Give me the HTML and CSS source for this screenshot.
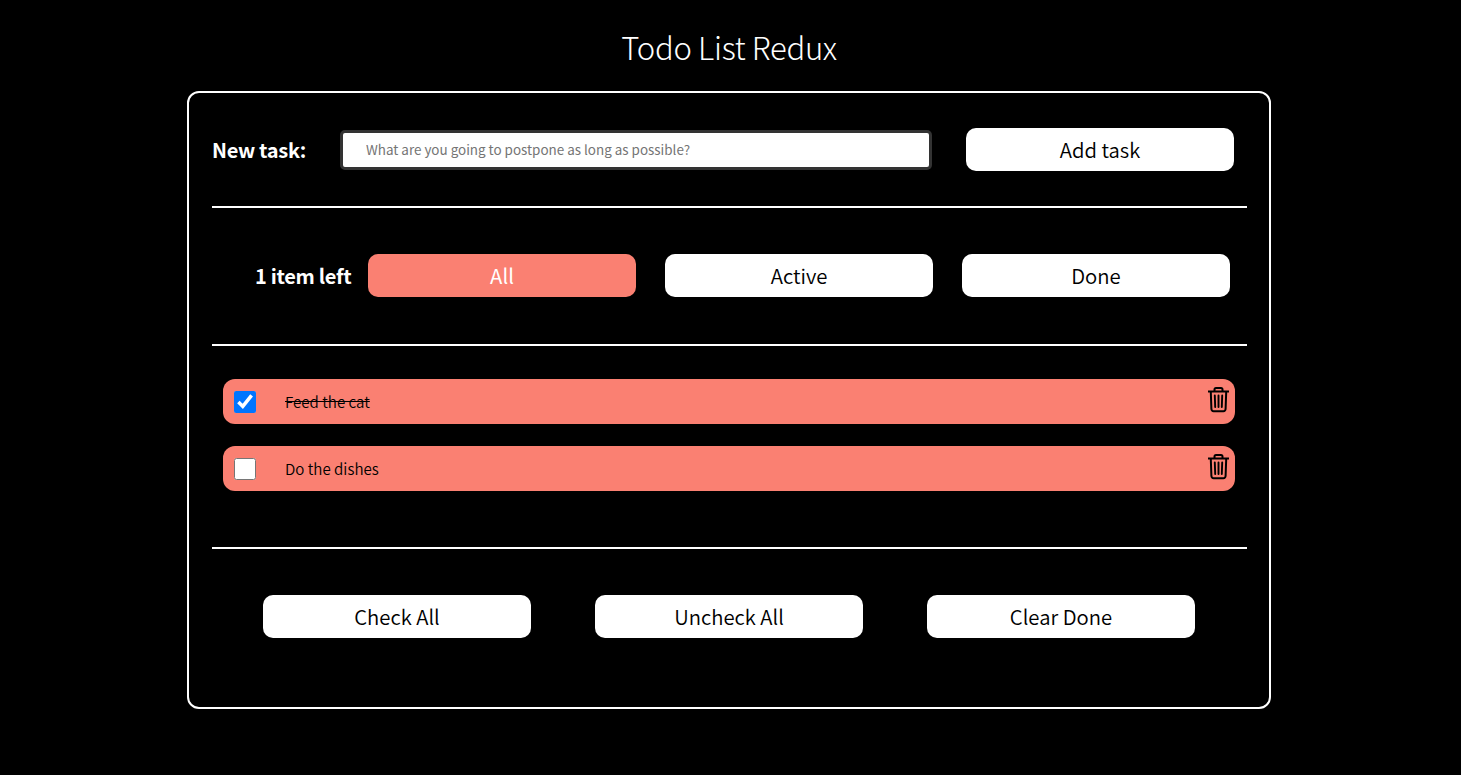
FILE: index.html
```html
<!DOCTYPE html>
<html lang="en">
<head>
<meta charset="utf-8">
<title>Todo List Redux</title>
<link rel="stylesheet" href="styles.css">
</head>
<body>
<h1 class="title"><span>Todo List Redux</span></h1>
<main class="card">
  <form class="new-task">
    <label class="label" for="task">New task:</label>
    <input class="task-input" id="task" type="text" placeholder="What are you going to postpone as long as possible?">
    <button class="btn" type="button">Add task</button>
  </form>
  <section class="filters">
    <span class="label count">1 item left</span>
    <button class="btn active" type="button">All</button>
    <button class="btn" type="button">Active</button>
    <button class="btn" type="button">Done</button>
  </section>
  <ul class="tasks">
    <li class="task">
      <input class="check" type="checkbox" checked aria-label="Feed the cat">
      <span class="name done">Feed the cat</span>
      <svg class="trash" viewBox="0 0 22 27" fill="none" stroke="#000" stroke-linejoin="round">
        <path stroke-width="2" d="M0 5.500H21M6.500 5.200V3.500Q6.500 2 8 2H13Q14.500 2 14.500 3.500V5.200M2.800 6L3.400 23Q3.600 25.200 5.600 25.200H15.400Q17.400 25.200 17.600 23L18.200 6"/>
        <path stroke-width="1.900" stroke-linecap="round" d="M6.800 9.500L7.200 21M10.500 9.500V21M14.200 9.500L13.800 21"/>
      </svg>
    </li>
    <li class="task">
      <input class="check" type="checkbox" aria-label="Do the dishes">
      <span class="name">Do the dishes</span>
      <svg class="trash" viewBox="0 0 22 27" fill="none" stroke="#000" stroke-linejoin="round">
        <path stroke-width="2" d="M0 5.500H21M6.500 5.200V3.500Q6.500 2 8 2H13Q14.500 2 14.500 3.500V5.200M2.800 6L3.400 23Q3.600 25.200 5.600 25.200H15.400Q17.400 25.200 17.600 23L18.200 6"/>
        <path stroke-width="1.900" stroke-linecap="round" d="M6.800 9.500L7.200 21M10.500 9.500V21M14.200 9.500L13.800 21"/>
      </svg>
    </li>
  </ul>
  <section class="actions">
    <button class="btn" type="button">Check All</button>
    <button class="btn" type="button">Uncheck All</button>
    <button class="btn" type="button">Clear Done</button>
  </section>
</main>
</body>
</html>
```
FILE: styles.css
```css
* { box-sizing: border-box; }
body {
  margin: 0;
  background: #000;
  color: #fff;
  font-family: "Source Sans Pro", "Noto Sans CJK SC", sans-serif;
}
.title {
  height: 91px;
  margin: 0 3px 0 0;
  padding-top: 24px;
  font-size: 31px;
  font-weight: 300;
  letter-spacing: -0.3px;
  line-height: 46px;
  text-align: center;
}
.card {
  width: 1084px;
  height: 618px;
  margin-left: 187px;
  padding: 0 22px 0 23px;
  border: 2px solid #fff;
  border-radius: 12px;
}
.new-task, .filters, .tasks { border-bottom: 2px solid #fff; }
.new-task {
  display: flex;
  align-items: center;
  height: 115px;
}
.label {
  width: 128px;
  font-size: 20px;
  font-weight: 700;
  letter-spacing: -0.3px;
  line-height: 30px;
  white-space: nowrap;
}
.task-input {
  width: 592px;
  height: 40px;
  margin-right: 34px;
  padding: 0 23px 1px;
  border: 3px solid #333;
  border-radius: 5px;
  background: #fff;
  font-family: inherit;
  font-size: 13.43px;
}
.task-input::placeholder { color: #757575; }
.btn {
  flex: none;
  width: 268px;
  height: 43px;
  padding: 0;
  border: 0;
  border-radius: 10px;
  background: #fff;
  color: #000;
  font-family: inherit;
  font-size: 20.3px;
  font-weight: 350;
  line-height: 43px;
}
.btn.active { background: salmon; color: #fff; font-weight: 400; }
.filters {
  display: flex;
  align-items: center;
  gap: 29px;
  height: 138px;
  padding: 0 0 1px 43px;
}
.count { width: 113px; margin-right: -29px; }
.tasks {
  display: flex;
  flex-direction: column;
  gap: 22px;
  height: 203px;
  margin: 0;
  padding: 33px 12px 0 11px;
  list-style: none;
}
.task {
  display: flex;
  align-items: center;
  height: 45px;
  padding: 0 5px 0 11px;
  border-radius: 12px;
  background: salmon;
  color: #000;
}
.check { width: 22px; height: 22px; margin: 0; }
.name { margin: 0 auto 2px 29px; font-size: 15.1px; font-weight: 350; line-height: 24px; }
.done { text-decoration: line-through; }
.trash { width: 22px; height: 27px; margin-bottom: 4px; }
.actions {
  display: flex;
  gap: 64px;
  padding: 46px 0 0 51px;
}
```
